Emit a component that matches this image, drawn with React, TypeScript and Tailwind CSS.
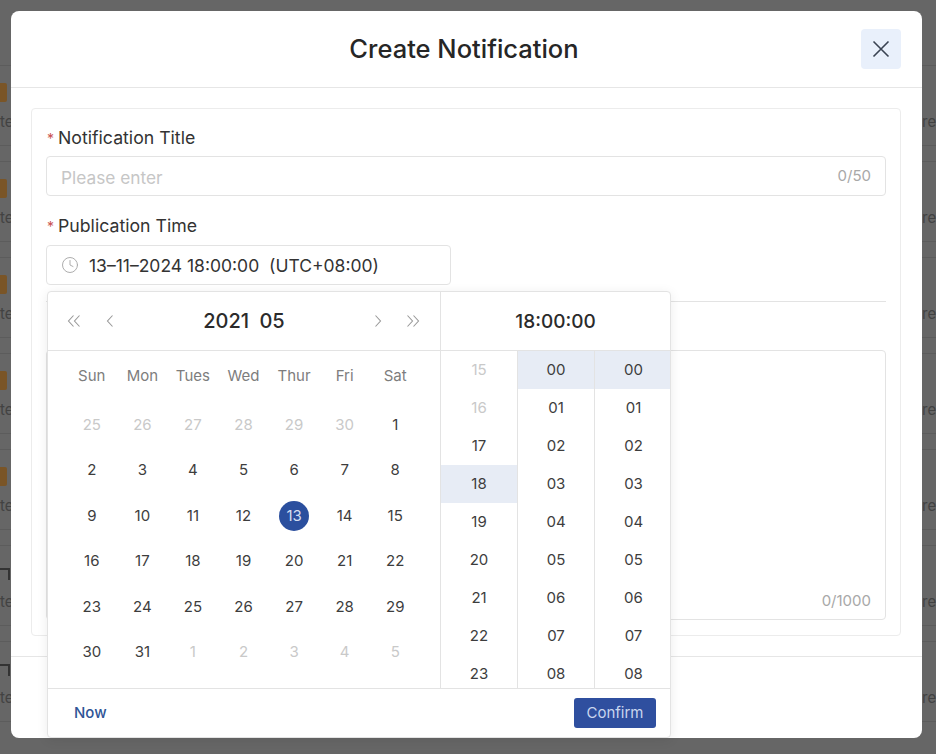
import React from 'react';
import { Clock } from 'lucide-react';

const weekDays = ['Sun', 'Mon', 'Tues', 'Wed', 'Thur', 'Fri', 'Sat'];
const prevDays = [25, 26, 27, 28, 29, 30];
const monthDays = Array.from({ length: 31 }, (_, i) => i + 1);
const nextDays = [1, 2, 3, 4, 5];
const hours = ['15', '16', '17', '18', '19', '20', '21', '22', '23'];
const minutes = ['00', '01', '02', '03', '04', '05', '06', '07', '08'];

function PageBehind() {
  return (
    <div className="pt-[65px]">
      {[0, 1, 2, 3, 4, 5, 6].map((row) => (
        <div key={row} className="h-[96px] border-t border-[#5c5c5c]">
          <div className="flex h-[80px] justify-between border-b border-[#5c5c5c]">
            <div className="w-[11px] overflow-hidden">
              {row < 5 ? (
                <div className="mt-[17px] h-[19px] w-[7px] rounded-r-[2px] bg-[#7a5527]" />
              ) : (
                <div className="mt-[22px] h-[12px] w-[10px] border-t-2 border-r-2 border-[#333333]" />
              )}
              <div className={row < 5 ? 'mt-[10px] text-right text-[15px] leading-5 text-[#424242]' : 'mt-[12px] text-right text-[15px] leading-5 text-[#424242]'}>
                te
              </div>
            </div>
            <div className="mt-[46px] w-[14px] text-[15px] leading-5 text-[#424242]">re</div>
          </div>
        </div>
      ))}
    </div>
  );
}

function Chevron({ d }: { d: string }) {
  return (
    <svg width="14" height="14" viewBox="0 0 14 14" fill="none" stroke="#999999" strokeWidth="1.1" className="shrink-0">
      <path d={d} />
    </svg>
  );
}

function CalendarPane() {
  return (
    <div className="w-[393px] border-r border-[#e3e3e3]">
      <div className="flex h-[59px] items-center border-b border-[#e3e3e3] pl-[19px] pr-[20px]">
        <Chevron d="M6.5 1.5 1.5 7l5 5.5M12.5 1.5 7.5 7l5 5.5" />
        <div className="ml-[22px]">
          <Chevron d="M9.5 1.5 4.5 7l5 5.5" />
        </div>
        <div className="flex-1 text-center text-[20px] font-medium text-[#2b2b2b] [word-spacing:5px]">2021 05</div>
        <div className="mr-[21px]">
          <Chevron d="M4.5 1.5 9.5 7l-5 5.5" />
        </div>
        <Chevron d="M1.5 1.5 6.5 7l-5 5.5M7.5 1.5l5 5.5-5 5.5" />
      </div>
      <div className="grid h-[51px] grid-cols-7 pb-[1px] pl-[18.5px] pr-[19.5px]">
        {weekDays.map((d) => (
          <div key={d} className="flex items-center justify-center text-[15px] text-[#7d7d7d]">
            {d}
          </div>
        ))}
      </div>
      <div className="grid grid-cols-7 auto-rows-[45.5px] pl-[18.5px] pr-[19.5px]">
        {prevDays.map((d) => (
          <div key={`p${d}`} className="flex items-center justify-center text-[15px] text-[#c9c9c9]">
            {d}
          </div>
        ))}
        {monthDays.map((d) => (
          <div key={d} className="flex items-center justify-center text-[15px] text-[#3d3d3d]">
            {d === 13 ? (
              <span className="flex h-[30px] w-[30px] items-center justify-center rounded-full bg-[#2b4f9e] text-[#d5def0]">{d}</span>
            ) : (
              d
            )}
          </div>
        ))}
        {nextDays.map((d) => (
          <div key={`n${d}`} className="flex items-center justify-center text-[15px] text-[#c9c9c9]">
            {d}
          </div>
        ))}
      </div>
    </div>
  );
}

function TimeColumn({ items, active, muted = [], last = false }: { items: string[]; active: string; muted?: string[]; last?: boolean }) {
  return (
    <div className={last ? 'flex-1' : 'w-[77px] border-r border-[#e3e3e3]'}>
      {items.map((t) => (
        <div
          key={t}
          className={
            t === active
              ? 'flex h-[38px] items-center justify-center bg-[#e7ecf5] text-[15px] text-[#3d3d3d]'
              : muted.includes(t)
                ? 'flex h-[38px] items-center justify-center text-[15px] text-[#c9c9c9]'
                : 'flex h-[38px] items-center justify-center text-[15px] text-[#3d3d3d]'
          }
        >
          <span className={last ? 'pl-[2px]' : ''}>{t}</span>
        </div>
      ))}
    </div>
  );
}

function DatePopup() {
  return (
    <div className="absolute left-[1px] top-[46px] z-10 w-[624px] rounded-[4px] border border-[#e3e3e3] bg-white shadow-[0_2px_12px_rgba(0,0,0,0.08)]">
      <div className="flex h-[396px]">
        <CalendarPane />
        <div className="flex flex-1 flex-col">
          <div className="flex h-[59px] shrink-0 items-center justify-center border-b border-[#e3e3e3] pt-[2px] text-[19px] font-medium text-[#2b2b2b]">
            18:00:00
          </div>
          <div className="flex h-[337px] overflow-hidden">
            <TimeColumn items={hours} active="18" muted={['15', '16']} />
            <TimeColumn items={minutes} active="00" />
            <TimeColumn items={minutes} active="00" last />
          </div>
        </div>
      </div>
      <div className="flex h-[49px] items-center justify-between border-t border-[#e3e3e3] pl-[26px] pr-[14px]">
        <span className="text-[15px] font-medium text-[#2f5596]">Now</span>
        <button className="flex h-[30px] w-[82px] items-center justify-center rounded-[3px] bg-[#2f4f9f] text-[15px] text-[#c9d6ee]">
          Confirm
        </button>
      </div>
    </div>
  );
}

export default function App() {
  return (
    <div className="relative h-[754px] w-[936px] overflow-hidden bg-[#666666] font-['Inter','Noto_Sans',sans-serif]">
      <PageBehind />

      {/* Modal */}
      <div className="absolute left-[11px] top-[11px] h-[727px] w-[911px] rounded-[8px] bg-white">
        <div className="relative flex h-[77px] items-center justify-center border-b border-[#e6e6e6] pr-[5px]">
          <h1 className="text-[25.5px] font-medium text-[#262626]">Create Notification</h1>
          <button className="absolute right-[21px] top-[18px] flex h-[40px] w-[40px] items-center justify-center rounded-[4px] bg-[#e9f0fb]">
            <svg width="18" height="18" viewBox="0 0 18 18" fill="none" stroke="#3a4352" strokeWidth="1.6">
              <path d="M1.5 1.5 16.5 16.5M16.5 1.5 1.5 16.5" />
            </svg>
          </button>
        </div>

        <div className="px-[20px] pt-[20px]">
          <div className="h-[528px] w-[870px] rounded-[4px] border border-[#ececec] px-[14px] pt-[17px]">
            <div className="flex h-[24px] items-center text-[17.7px] text-[#333333]">
              <span className="ml-[1px] mr-[4px] text-[14px] text-[#c9514f]">*</span>
              Notification Title
            </div>
            <div className="mt-[6px] flex h-[40px] items-center justify-between rounded-[4px] border border-[#e3e3e3] px-[14px] text-[17.3px]">
              <span className="pt-[3px] text-[#c6c6c6]">Please enter</span>
              <span className="text-[15px] text-[#a8a8a8]">0/50</span>
            </div>
            <div className="mt-[18px] flex h-[24px] items-center text-[17.7px] text-[#333333]">
              <span className="ml-[1px] mr-[4px] text-[14px] text-[#c9514f]">*</span>
              Publication Time
            </div>
            <div className="relative mt-[7px] w-[405px]">
              <div className="flex h-[40px] items-center rounded-[4px] border border-[#e3e3e3] pl-[14px] text-[17.5px] text-[#333333]">
                <Clock size={18} strokeWidth={1.25} className="text-[#a8a8a8]" />
                <span className="ml-[10px] whitespace-pre pt-[3px]">13–11–2024 18:00:00  (UTC+08:00)</span>
              </div>
              <DatePopup />
            </div>
            <div className="mt-[16px] border-t border-[#e3e3e3]" />
            <div className="mt-[48px] flex h-[270px] items-end justify-end rounded-[4px] border border-[#e3e3e3] px-[14px] pb-[7px] text-[15px] text-[#a8a8a8]">
              0/1000
            </div>
          </div>
        </div>

        <div className="mt-[20px] border-t border-[#e6e6e6]" />
      </div>
    </div>
  );
}
